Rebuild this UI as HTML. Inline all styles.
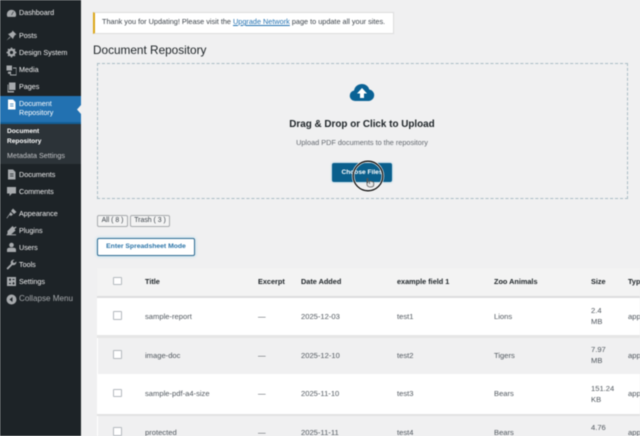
<!DOCTYPE html>
<html><head><meta charset="utf-8"><style>
html,body{margin:0;padding:0}
body{width:640px;height:436px;overflow:hidden;background:#f0f0f1;font-family:"Liberation Sans",sans-serif;position:relative}
#w{position:absolute;left:0;top:0;width:640px;height:436px;overflow:hidden;filter:blur(.42px)}
.a{position:absolute;white-space:nowrap}
.m{position:absolute;left:19px;font-size:7.2px;line-height:12px;color:#f0f0f1;white-space:nowrap}
.i{position:absolute;left:6px;width:11px;height:11px}
.r{position:absolute;left:97px;width:543px}
.c{position:absolute;font-size:7.6px;color:#50575e;white-space:nowrap;line-height:12px}
.h{position:absolute;font-size:7.3px;color:#1d2327;font-weight:bold;white-space:nowrap;line-height:12px;top:276px}
.b{position:absolute;left:113px;width:6.5px;height:6.500px;border:1px solid #b4b9be;background:#fff;border-radius:1px}
</style></head><body><div id="w">
<div class="a" style="left:0;top:0;width:81px;height:436px;background:#1d2327"></div>
<div class="a" style="left:0;top:96px;width:81px;height:26px;background:#2271b1"></div>
<div class="a" style="left:0;top:122px;width:81px;height:2px;background:#135e96"></div>
<div class="a" style="left:0;top:124px;width:81px;height:40px;background:#2c3338"></div>
<svg class="a" style="left:77px;top:104.500px" width="4" height="9"><path d="M4 0L0 4.500L4 9z" fill="#f0f0f1"/></svg>

<div class="m" style="top:7px">Dashboard</div>
<div class="m" style="top:30px">Posts</div>
<div class="m" style="top:47px">Design System</div>
<div class="m" style="top:64px">Media</div>
<div class="m" style="top:81px">Pages</div>
<div class="m" style="top:98px;color:#fff">Document</div>
<div class="m" style="top:107px;color:#fff">Repository</div>
<div class="m" style="top:126px;left:7px;font-weight:bold;color:#fff;font-size:6.600px">Document</div>
<div class="m" style="top:136px;left:7px;font-weight:bold;color:#fff;font-size:6.600px">Repository</div>
<div class="m" style="top:150px;left:7px;color:#c3c4c7;font-size:7.200px">Metadata Settings</div>
<div class="m" style="top:168.500px">Documents</div>
<div class="m" style="top:185.500px">Comments</div>
<div class="m" style="top:208px">Appearance</div>
<div class="m" style="top:225px">Plugins</div>
<div class="m" style="top:242px">Users</div>
<div class="m" style="top:259px">Tools</div>
<div class="m" style="top:276px">Settings</div>
<div class="m" style="top:293px;color:#a7aaad;font-size:8.100px">Collapse Menu</div>

<svg class="i" style="top:8px" viewBox="0 0 11 11"><path d="M5.500 1.500A5 5 0 0 0 .5 6.500c0 1.200.4 2 1 2.700h8c.6-.7 1-1.500 1-2.700a5 5 0 0 0-5-5zM5.500 7L7.500 3.500" fill="#a7aaad" stroke="#1d2327" stroke-width=".6"/></svg>
<svg class="i" style="top:30px" viewBox="0 0 11 11"><path d="M6.500 .5L10.500 4.500L9 5L7.500 7.500L7 9L2 4L3.500 3.500L6 2zM3.500 7L.5 10.500L4.500 7.500z" fill="#a7aaad"/></svg>
<svg class="i" style="top:47px" viewBox="0 0 11 11"><circle cx="5.500" cy="5.500" r="3" fill="none" stroke="#a7aaad" stroke-width="2"/><path d="M5.500 .5V10.500M.5 5.500H10.500M2 2L9 9M9 2L2 9" stroke="#a7aaad" stroke-width="1.400"/><circle cx="5.500" cy="5.500" r="1.600" fill="#1d2327"/></svg>
<svg class="i" style="top:65px" viewBox="0 0 11 11"><path d="M.5 .5H6V5.500H.5zM4 6.500H5V9.500H10V3.500H7V2.500H10.500V10.500H4z" fill="#a7aaad"/><circle cx="3" cy="7.800" r="1.200" fill="#a7aaad"/></svg>
<svg class="i" style="top:82px" viewBox="0 0 11 11"><path d="M3 .5H9.500V8H3zM1.500 2.500H2.300V9H8V10.500H1.500z" fill="#a7aaad"/></svg>
<svg class="i" style="top:99px" viewBox="0 0 11 11"><path d="M2 .5H7L9.500 3V10.500H2z" fill="#fff"/><path d="M4 5H7.500M4 7H7.500" stroke="#2271b1" stroke-width=".8"/></svg>
<svg class="i" style="top:169px" viewBox="0 0 11 11"><path d="M2 .5H7L9.500 3V10.500H2z" fill="#a7aaad"/><path d="M4 5H7.500M4 7H7.500" stroke="#1d2327" stroke-width=".8"/></svg>
<svg class="i" style="top:186px" viewBox="0 0 11 11"><path d="M1 1H10V7.500H6L3.500 10V7.500H1z" fill="#a7aaad"/></svg>
<svg class="i" style="top:208px" viewBox="0 0 11 11"><path d="M7 .5L10.500 4L8 6L5 3zM4.500 4L7 6.500L5 8L3.500 7L1 10.500L.5 10L3 6.500z" fill="#a7aaad"/></svg>
<svg class="i" style="top:225px" viewBox="0 0 11 11"><path d="M6.500 1L8 2.500L10 1.500L10.500 2.500L8.500 4L9.500 5.500L5 9.500H2L1 10.500L.5 10L1.500 8.500V6z" fill="#a7aaad"/><path d="M1.500 9.800H10" stroke="#a7aaad"/></svg>
<svg class="i" style="top:242px" viewBox="0 0 11 11"><circle cx="5.500" cy="3" r="2.300" fill="#a7aaad"/><path d="M1 10V7.500C1 6.500 2 5.800 3.500 5.800H7.500C9 5.800 10 6.500 10 7.500V10z" fill="#a7aaad"/></svg>
<svg class="i" style="top:259px" viewBox="0 0 11 11"><path d="M10.300 2.500L8.500 4L7 3.500L6.800 2L8.500 .7A3 3 0 0 0 5 4.800L.8 9A1 1 0 0 0 2.200 10.300L6.400 6A3 3 0 0 0 10.300 2.500z" fill="#a7aaad"/></svg>
<svg class="i" style="top:276px" viewBox="0 0 11 11"><path d="M1 1H10V10H1z" fill="#a7aaad"/><path d="M3 3.500H5M3 7.500H5M6.500 3.500H8.500M6.500 7.500H8.500M4 2.500V5M7.500 6V8.500" stroke="#1d2327" stroke-width=".9"/></svg>
<svg class="i" style="top:294px" viewBox="0 0 11 11"><circle cx="5.500" cy="5.500" r="5" fill="#a7aaad"/><path d="M6.500 3L3.500 5.500L6.500 8z" fill="#1d2327"/></svg>

<div class="a" style="left:93px;top:11.500px;width:298px;height:20px;background:#fff;border:1px solid #dcdcde;border-left:2px solid #dba617"></div>
<div class="a" style="left:102px;top:16px;font-size:7.300px;line-height:12px;color:#3c434a">Thank you for Updating! Please visit the <span style="color:#2271b1;text-decoration:underline">Upgrade Network</span> page to update all your sites.</div>
<div class="a" style="left:93px;top:42px;font-size:11.800px;line-height:16px;color:#1d2327">Document Repository</div>

<div class="a" style="left:97px;top:63px;width:529px;height:134px;border:1px dashed #a9bcc5"></div>
<svg class="a" style="left:349px;top:83px" width="26" height="19" viewBox="0 0 26 19"><path d="M6 18A5.300 5.300 0 0 1 5 7.500C5.800 3.500 9 1 13 1C16.500 1 19.300 3 20.300 6.500A5.800 5.800 0 0 1 20 18z" fill="#0a6295"/><path d="M13 5L18 10.500H15V15H11V10.500H8z" fill="#fff"/></svg>
<div class="a" style="left:262px;top:118px;font-size:9.900px;font-weight:bold;line-height:13px;color:#1d2327;width:200px;text-align:center">Drag &amp; Drop or Click to Upload</div>
<div class="a" style="left:262px;top:136.500px;font-size:7.300px;line-height:12px;color:#646970;width:200px;text-align:center">Upload PDF documents to the repository</div>
<div class="a" style="left:332px;top:163px;width:60px;height:19px;background:#0a5f8c;border-radius:2px;box-shadow:0 0 2px #8fc4de"></div>
<div class="a" style="left:332px;top:167px;width:60px;text-align:center;font-size:6.600px;font-weight:bold;line-height:11px;color:#fff">Choose Files</div>
<svg class="a" style="left:351px;top:159px" width="34" height="34" viewBox="0 0 34 34"><circle cx="17" cy="17" r="14.800" fill="none" stroke="#fff" stroke-width="2.600"/><circle cx="17" cy="17" r="14.800" fill="none" stroke="#0c0c0c" stroke-width="1.300"/><path d="M16 19.500V26C17 28.500 21 28.500 22.500 27C22.800 25.500 22.800 24 22.500 23L18.500 22V25" fill="#e8e8e8" stroke="#555" stroke-width=".8"/><path d="M16.500 19V24" stroke="#555" stroke-width="1.500"/></svg>

<div class="a" style="left:97px;top:215px;width:29px;height:10px;border:1px solid #a7aaad;border-radius:2px;background:#f3f3f3;font-size:6.900px;line-height:10px;color:#3c434a;text-align:center">All ( 8 )</div>
<div class="a" style="left:130px;top:215px;width:38px;height:10px;border:1px solid #a7aaad;border-radius:2px;background:#f3f3f3;font-size:6.900px;line-height:10px;color:#3c434a;text-align:center">Trash ( 3 )</div>
<div class="a" style="left:97px;top:238px;width:96px;height:16px;border:1px solid #2e6a90;border-radius:2px;background:#fff;box-shadow:0 0 3px #a5d8ee;font-size:6.800px;font-weight:bold;line-height:16px;color:#2b74a8;text-align:center">Enter Spreadsheet Mode</div>

<div class="r" style="top:268px;height:28px;background:#f3f3f3;border-bottom:2px solid #dcdcde"></div>
<div class="r" style="top:298px;height:37px;background:#fff"></div>
<div class="r" style="top:335px;height:2.500px;background:#e6e6e6"></div>
<div class="r" style="top:337.500px;height:36px;background:#f0f0f1;border-left:1px solid #fff;box-sizing:border-box"></div>
<div class="r" style="top:373.500px;height:2px;background:#fff"></div>
<div class="r" style="top:375.500px;height:38px;background:#fff"></div>
<div class="r" style="top:413.500px;height:2px;background:#e2e2e3"></div>
<div class="r" style="top:415.500px;height:21px;background:#f0f0f1;border-left:1px solid #fff;box-sizing:border-box"></div>

<div class="b" style="top:276.500px"></div><div class="b" style="top:311px"></div><div class="b" style="top:350px"></div><div class="b" style="top:388.500px"></div><div class="b" style="top:427px"></div>

<div class="h" style="left:145px">Title</div><div class="h" style="left:258px">Excerpt</div><div class="h" style="left:301px">Date Added</div><div class="h" style="left:397px">example field 1</div><div class="h" style="left:494px">Zoo Animals</div><div class="h" style="left:591px">Size</div><div class="h" style="left:628px">Type</div>

<div class="c" style="left:145px;top:311px">sample-report</div><div class="c" style="left:258px;top:311px">—</div><div class="c" style="left:301px;top:311px">2025-12-03</div><div class="c" style="left:397px;top:311px">test1</div><div class="c" style="left:494px;top:311px">Lions</div><div class="c" style="left:591px;top:305px">2.4</div><div class="c" style="left:591px;top:316px">MB</div><div class="c" style="left:628px;top:311px">application/pdf</div>
<div class="c" style="left:145px;top:350px">image-doc</div><div class="c" style="left:258px;top:350px">—</div><div class="c" style="left:301px;top:350px">2025-12-10</div><div class="c" style="left:397px;top:350px">test2</div><div class="c" style="left:494px;top:350px">Tigers</div><div class="c" style="left:591px;top:344px">7.97</div><div class="c" style="left:591px;top:355px">MB</div><div class="c" style="left:628px;top:350px">application/pdf</div>
<div class="c" style="left:145px;top:388px">sample-pdf-a4-size</div><div class="c" style="left:258px;top:388px">—</div><div class="c" style="left:301px;top:388px">2025-11-10</div><div class="c" style="left:397px;top:388px">test3</div><div class="c" style="left:494px;top:388px">Bears</div><div class="c" style="left:591px;top:383px">151.24</div><div class="c" style="left:591px;top:394px">KB</div><div class="c" style="left:628px;top:388px">application/pdf</div>
<div class="c" style="left:145px;top:427px">protected</div><div class="c" style="left:258px;top:427px">—</div><div class="c" style="left:301px;top:427px">2025-11-11</div><div class="c" style="left:397px;top:427px">test4</div><div class="c" style="left:494px;top:427px">Bears</div><div class="c" style="left:591px;top:422px">4.76</div><div class="c" style="left:628px;top:427px">application/pdf</div>
</div></body></html>
